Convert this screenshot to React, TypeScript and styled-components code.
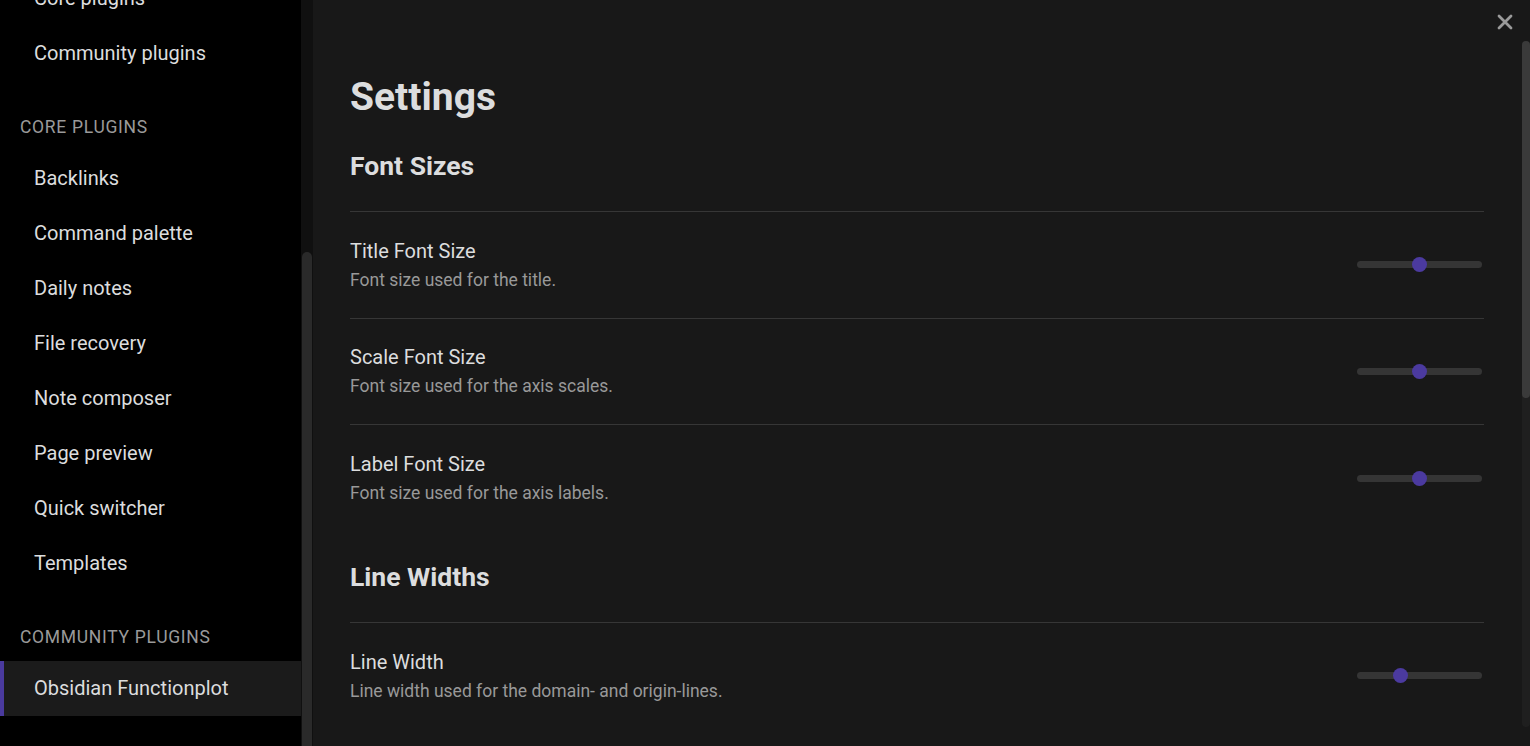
import React from "react";
import styled, { createGlobalStyle } from "styled-components";

const Global = createGlobalStyle`
  html, body { margin: 0; padding: 0; background: #181818; }
  body { font-family: Roboto, "Noto Sans", "Liberation Sans", sans-serif; overflow: hidden; }
  * { box-sizing: border-box; }
`;

const Page = styled.div`
  display: flex;
  width: 1530px;
  height: 746px;
  overflow: hidden;
  position: relative;
  background: #181818;
`;

const Sidebar = styled.nav`
  display: flex;
  width: 313px;
  flex-shrink: 0;
  height: 746px;
`;

const SideList = styled.div`
  width: 301px;
  background: #000;
  display: flex;
  flex-direction: column;
  margin-top: -29px;
`;

const SideItem = styled.div<{ $active?: boolean }>`
  height: 55px;
  display: flex;
  align-items: center;
  padding-left: ${(p) => (p.$active ? "30px" : "34px")};
  padding-bottom: 1px;
  font-size: 20px;
  color: #dcddde;
  background: ${(p) => (p.$active ? "#1b1b1b" : "transparent")};
  border-left: ${(p) => (p.$active ? "4px solid #4a3a9e" : "none")};
`;

const SideHeader = styled.div`
  padding: 36px 0 0 20px;
  height: 70px;
  font-size: 17.5px;
  line-height: 20px;
  letter-spacing: 0.04em;
  color: #9a9a9a;
  text-transform: uppercase;
`;

const SideScroll = styled.div`
  width: 12px;
  background: #101010;
  display: flex;
  flex-direction: column;
  padding: 252px 1px 0 1px;
`;

const SideThumb = styled.div`
  flex: 1;
  background: #2a2a2a;
  border-radius: 6px 6px 0 0;
`;

const Main = styled.main`
  flex: 1;
  display: flex;
  height: 746px;
`;

const Content = styled.div`
  flex: 1;
  padding: 74px 38px 0 37px;
  display: flex;
  flex-direction: column;
`;

const Title = styled.h1`
  margin: 0;
  font-size: 39px;
  line-height: 47px;
  font-weight: 700;
  color: #dcddde;
`;

const SectionHeading = styled.h2`
  margin: 0;
  padding: 28px 0 28px;
  font-size: 26.5px;
  line-height: 34px;
  font-weight: 700;
  color: #dcddde;
  border-bottom: 1px solid #363636;
`;

const Row = styled.div<{ $last?: boolean }>`
  display: flex;
  align-items: center;
  height: 106.5px;
  padding-bottom: 1px;
  border-bottom: ${(p) => (p.$last ? "none" : "1px solid #363636")};
`;

const Info = styled.div`
  flex: 1;
  display: flex;
  flex-direction: column;
  gap: 5px;
`;

const Name = styled.div`
  font-size: 20px;
  line-height: 26px;
  color: #dcddde;
`;

const Desc = styled.div`
  font-size: 17.5px;
  line-height: 22px;
  color: #999;
`;

const Slider = styled.div`
  position: relative;
  width: 125px;
  height: 7px;
  border-radius: 4px;
  background: #353535;
  margin-right: 2px;
  margin-top: 1px;
`;

const Thumb = styled.div`
  position: absolute;
  top: 50%;
  width: 15px;
  height: 15px;
  margin-left: -7.5px;
  margin-top: -7.5px;
  border-radius: 50%;
  background: #4b3a9f;
`;

const Scroll = styled.div`
  width: 8px;
  margin: 41px 0 19px;
  background: #1f1f1f;
  border-radius: 4px;
  display: flex;
  flex-direction: column;
`;

const ScrollThumb = styled.div`
  height: 357px;
  background: #3a3a3a;
  border-radius: 4px;
`;

const Close = styled.div`
  position: absolute;
  top: 13px;
  right: 16px;
  width: 18px;
  height: 18px;
  color: #9a9a9a;
  display: flex;
`;

const sideTop = ["Core plugins", "Community plugins"];
const core = [
  "Backlinks",
  "Command palette",
  "Daily notes",
  "File recovery",
  "Note composer",
  "Page preview",
  "Quick switcher",
  "Templates",
];

type Setting = { name: string; desc: string; pos: number };

const fontSettings: Setting[] = [
  { name: "Title Font Size", desc: "Font size used for the title.", pos: 62 },
  { name: "Scale Font Size", desc: "Font size used for the axis scales.", pos: 62 },
  { name: "Label Font Size", desc: "Font size used for the axis labels.", pos: 62 },
];

const lineSettings: Setting[] = [
  { name: "Line Width", desc: "Line width used for the domain- and origin-lines.", pos: 43 },
];

function SettingRow({ s, last }: { s: Setting; last?: boolean }) {
  return (
    <Row $last={last}>
      <Info>
        <Name>{s.name}</Name>
        <Desc>{s.desc}</Desc>
      </Info>
      <Slider>
        <Thumb style={{ left: `${s.pos}px` }} />
      </Slider>
    </Row>
  );
}

export default function App() {
  return (
    <>
      <Global />
      <Page>
        <Sidebar>
          <SideList>
            {sideTop.map((t) => (
              <SideItem key={t}>{t}</SideItem>
            ))}
            <SideHeader>Core plugins</SideHeader>
            {core.map((t) => (
              <SideItem key={t}>{t}</SideItem>
            ))}
            <SideHeader>Community plugins</SideHeader>
            <SideItem $active>Obsidian Functionplot</SideItem>
          </SideList>
          <SideScroll>
            <SideThumb />
          </SideScroll>
        </Sidebar>
        <Main>
          <Content>
            <Title>Settings</Title>
            <SectionHeading>Font Sizes</SectionHeading>
            {fontSettings.map((s, i) => (
              <SettingRow key={s.name} s={s} last={i === fontSettings.length - 1} />
            ))}
            <SectionHeading>Line Widths</SectionHeading>
            {lineSettings.map((s, i) => (
              <SettingRow key={s.name} s={s} last={i === lineSettings.length - 1} />
            ))}
          </Content>
          <Scroll>
            <ScrollThumb />
          </Scroll>
        </Main>
        <Close>
          <svg width="18" height="18" viewBox="0 0 18 18" fill="none" stroke="currentColor" strokeWidth="2.8" strokeLinecap="round">
            <path d="M3 3L15 15M15 3L3 15" />
          </svg>
        </Close>
      </Page>
    </>
  );
}
